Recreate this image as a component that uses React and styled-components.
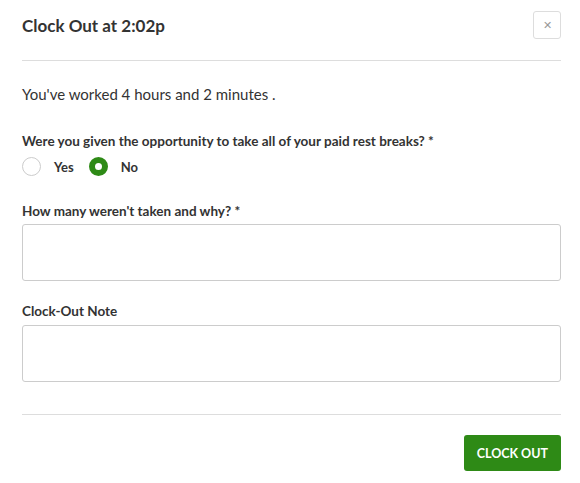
import { useState } from "react";
import styled, { createGlobalStyle } from "styled-components";

const GlobalStyle = createGlobalStyle`
  body {
    margin: 0;
    background: #fff;
    font-family: "Source Sans Pro", Lato, "Liberation Sans", sans-serif;
    color: #333;
  }
`;

const Modal = styled.div`
  width: 580px;
  height: 483px;
  background: #fff;
  box-sizing: border-box;
`;

const Header = styled.div`
  display: flex;
  align-items: center;
  justify-content: space-between;
  margin: 0 19px 0 22px;
  padding: 11px 0 21px;
  border-bottom: 1px solid #ddd;
`;

const Title = styled.h2`
  margin: 0;
  font-size: 17px;
  font-weight: 700;
  color: #333;
`;

const CloseButton = styled.button`
  width: 28px;
  height: 28px;
  border: 1px solid #ddd;
  border-radius: 3px;
  background: #fff;
  color: #999;
  font-size: 11px;
  line-height: 1;
  padding: 0;
  display: flex;
  align-items: center;
  justify-content: center;
`;

const Body = styled.div`
  margin: 0 19px 0 22px;
  padding: 24px 0 32px;
  border-bottom: 1px solid #ddd;
`;

const Summary = styled.p`
  margin: 0 0 30px;
  font-size: 15px;
  color: #333;
`;

const Field = styled.div`
  margin-bottom: ${(p) => p.$gap ?? 22}px;
`;

const Label = styled.label`
  display: block;
  font-size: 13.5px;
  font-weight: 700;
  color: #333;
  margin-bottom: ${(p) => p.$gap ?? 6}px;
`;

const RadioRow = styled.div`
  display: flex;
  align-items: center;
`;

const RadioOption = styled.label`
  display: flex;
  align-items: center;
  margin-right: 15px;
  font-size: 13px;
  font-weight: 700;
  color: #333;
  cursor: pointer;
`;

const RadioDot = styled.span`
  width: 19px;
  height: 19px;
  box-sizing: border-box;
  border-radius: 50%;
  margin-right: 13px;
  border: ${(p) => (p.$checked ? "6px solid #2e8a16" : "1px solid #ccc")};
  background: #fff;
`;

const TextArea = styled.textarea`
  display: block;
  width: 100%;
  height: 57px;
  box-sizing: border-box;
  border: 1px solid #ccc;
  border-radius: 3px;
  resize: none;
  font-family: inherit;
  font-size: 14px;
  padding: 8px 10px;
`;

const Footer = styled.div`
  display: flex;
  justify-content: flex-end;
  margin: 0 19px 0 22px;
  padding-top: 20px;
`;

const PrimaryButton = styled.button`
  height: 36px;
  padding: 0 13px;
  border: none;
  border-radius: 3px;
  background: #2e8a16;
  color: #fff;
  font-family: inherit;
  font-size: 12.5px;
  font-weight: 700;
  cursor: pointer;
`;

const App = () => {
  const [gaveBreaks, setGaveBreaks] = useState("no");

  return (
    <Modal>
      <GlobalStyle />
      <Header>
        <Title>Clock Out at 2:02p</Title>
        <CloseButton>&#x2715;</CloseButton>
      </Header>
      <Body>
        <Summary>You've worked 4 hours and 2 minutes .</Summary>
        <Field $gap={27}>
          <Label $gap={8}>
            Were you given the opportunity to take all of your paid rest breaks? *
          </Label>
          <RadioRow>
            <RadioOption onClick={() => setGaveBreaks("yes")}>
              <RadioDot $checked={gaveBreaks === "yes"} />
              Yes
            </RadioOption>
            <RadioOption onClick={() => setGaveBreaks("no")}>
              <RadioDot $checked={gaveBreaks === "no"} />
              No
            </RadioOption>
          </RadioRow>
        </Field>
        <Field $gap={22}>
          <Label $gap={5}>How many weren't taken and why? *</Label>
          <TextArea />
        </Field>
        <Field $gap={0}>
          <Label>Clock-Out Note</Label>
          <TextArea />
        </Field>
      </Body>
      <Footer>
        <PrimaryButton>CLOCK OUT</PrimaryButton>
      </Footer>
    </Modal>
  );
};

export default App;
